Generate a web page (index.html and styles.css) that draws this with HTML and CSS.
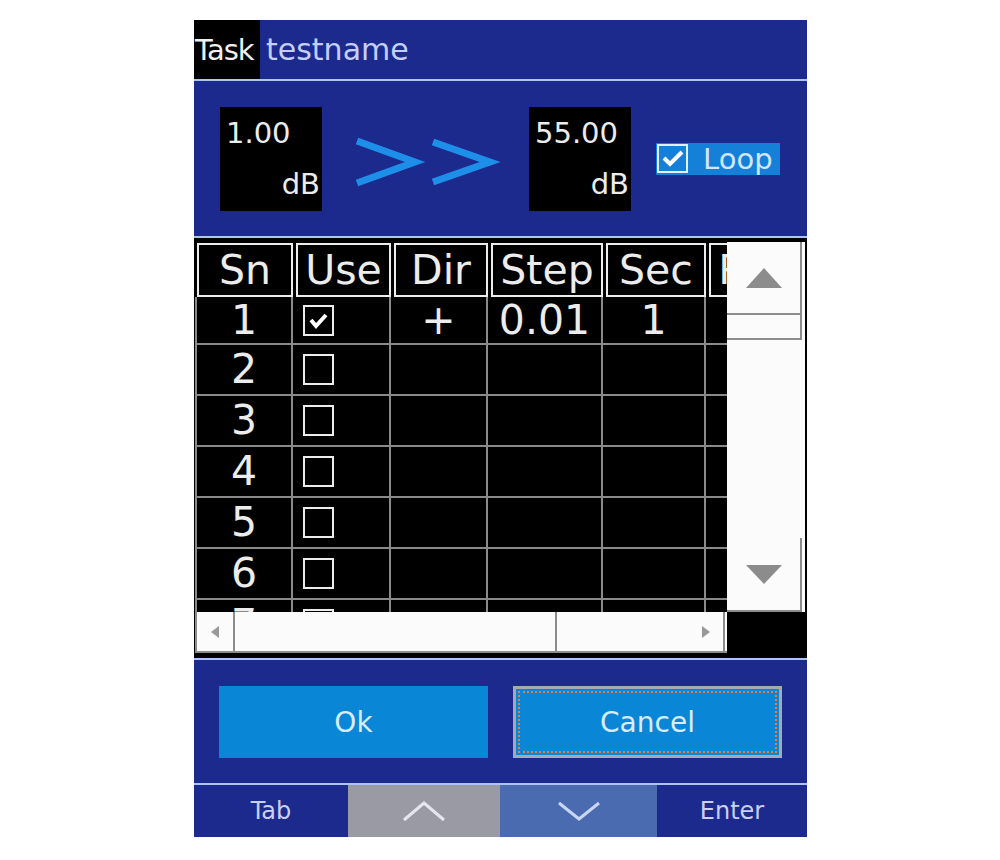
FILE: index.html
```html
<!DOCTYPE html>
<html>
<head>
<meta charset="utf-8">
<link rel="stylesheet" href="styles.css">
</head>
<body>
<div class="panel">
  <div class="titlebar"><span class="tag">Task</span><span class="name">testname</span></div>
  <div class="rule"></div>
  <div class="range">
    <div class="valbox"><span class="val">1.00</span><span class="unit">dB</span></div>
    <svg class="arrows" viewBox="0 0 142 52" width="142" height="52">
      <polyline points="5,8 63,29 5,50" />
      <polyline points="81,9 138,29 81,49" />
    </svg>
    <div class="valbox second"><span class="val">55.00</span><span class="unit">dB</span></div>
    <div class="loop">
      <span class="cb"><svg viewBox="0 0 27 25" width="27" height="25"><polyline points="5,12 11,18 23,6" /></svg></span>
      <span class="loop-label">Loop</span>
    </div>
  </div>
  <div class="rule"></div>
  <div class="gridarea">
    <div class="viewport">
      <div class="table">
        <div class="th first">Sn</div>
        <div class="th">Use</div>
        <div class="th">Dir</div>
        <div class="th">Step</div>
        <div class="th">Sec</div>
        <div class="th">Rpt</div>

        <div class="td first">1</div>
        <div class="td use"><span class="box"><svg viewBox="0 0 27 27" width="27" height="27"><polyline points="6,13 11,19 21,8" /></svg></span></div>
        <div class="td">+</div>
        <div class="td">0.01</div>
        <div class="td">1</div>
        <div class="td"></div>

        <div class="td first">2</div>
        <div class="td use"><span class="box"></span></div>
        <div class="td"></div><div class="td"></div><div class="td"></div><div class="td"></div>

        <div class="td first">3</div>
        <div class="td use"><span class="box"></span></div>
        <div class="td"></div><div class="td"></div><div class="td"></div><div class="td"></div>

        <div class="td first">4</div>
        <div class="td use"><span class="box"></span></div>
        <div class="td"></div><div class="td"></div><div class="td"></div><div class="td"></div>

        <div class="td first">5</div>
        <div class="td use"><span class="box"></span></div>
        <div class="td"></div><div class="td"></div><div class="td"></div><div class="td"></div>

        <div class="td first">6</div>
        <div class="td use"><span class="box"></span></div>
        <div class="td"></div><div class="td"></div><div class="td"></div><div class="td"></div>

        <div class="td first">7</div>
        <div class="td use"><span class="box"></span></div>
        <div class="td"></div><div class="td"></div><div class="td"></div><div class="td"></div>
      </div>
    </div>
    <div class="vscroll">
      <div class="vbtn"><span class="tri-up"></span></div>
      <div class="vthumb"></div>
      <div class="vtrack"></div>
      <div class="vbtn down"><span class="tri-down"></span></div>
    </div>
    <div class="hscroll">
      <div class="hbtn"><span class="tri-left"></span></div>
      <div class="hthumb"></div>
      <div class="htrack"></div>
      <div class="hbtn right"><span class="tri-right"></span></div>
    </div>
    <div class="corner"></div>
  </div>
  <div class="rule"></div>
  <div class="actions">
    <button class="btn">Ok</button>
    <button class="btn focus">Cancel</button>
  </div>
  <div class="rule"></div>
  <div class="softkeys">
    <div class="key">Tab</div>
    <div class="key up"><svg viewBox="0 0 44 22" width="44" height="22"><polyline points="2,20 22,3 42,20" /></svg></div>
    <div class="key down"><svg viewBox="0 0 44 22" width="44" height="22"><polyline points="2,3 22,19 42,3" /></svg></div>
    <div class="key">Enter</div>
  </div>
</div>
</body>
</html>
```
FILE: styles.css
```css
* { box-sizing: border-box; }

body {
  margin: 0;
  background: #ffffff;
  font-family: "DejaVu Sans", "Noto Sans", sans-serif;
}

.panel {
  width: 613px;
  margin: 20px 0 0 194px;
  background: #1c2a8e;
}

.titlebar {
  height: 59px;
  display: flex;
  align-items: center;
}

.tag {
  height: 100%;
  width: 66px;
  background: #000;
  color: #f0f0f0;
  font-size: 29px;
  letter-spacing: -1px;
  display: flex;
  align-items: center;
  padding-left: 1px;
}

.name {
  margin-left: 6px;
  color: #c4cfff;
  font-size: 30px;
}

.rule {
  height: 2px;
  background: #aec4f2;
}

.range {
  height: 155px;
  display: flex;
  align-items: center;
  padding-left: 26px;
}

.valbox {
  width: 102px;
  height: 104px;
  background: #000;
  color: #ececec;
  font-size: 29px;
  line-height: 1;
  display: flex;
  flex-direction: column;
  justify-content: space-between;
  padding: 12px 2px 12px 6px;
}

.unit { align-self: flex-end; }

.valbox.second { margin-left: 35px; }

.arrows {
  margin-left: 30px;
  overflow: visible;
}

.arrows polyline {
  fill: none;
  stroke: #1e8fe8;
  stroke-width: 7;
  stroke-linejoin: miter;
}

.loop {
  margin-left: 25px;
  width: 124px;
  height: 32px;
  background: #1580d8;
  display: flex;
  align-items: center;
  padding-left: 1px;
  color: #d2e6ff;
  font-size: 29px;
}

.cb {
  width: 31px;
  height: 29px;
  border: 2px solid #e6eef8;
  margin-right: 15px;
  display: flex;
}

.cb polyline {
  fill: none;
  stroke: #ffffff;
  stroke-width: 4;
}

.gridarea {
  height: 420px;
  background: #000;
  display: grid;
  grid-template-columns: 532px 78px;
  grid-template-rows: 372px 41px;
  padding: 2px 2px 0 1px;
}

.viewport {
  overflow: hidden;
}

.table {
  display: grid;
  grid-template-columns: 98px 98px 97px 115px 103px 92px;
  grid-template-rows: 57px 48px repeat(6, 51px);
  width: max-content;
  color: #ececec;
  font-size: 41px;
  line-height: 1;
}

.th {
  border: 2px solid #ececec;
  margin: 3px 0 0 3px;
  display: flex;
  align-items: center;
  justify-content: center;
}

.th.first { margin-left: 2px; }

.td {
  display: flex;
  align-items: center;
  justify-content: center;
  border-right: 2px solid #8a8a8a;
  border-bottom: 2px solid #8a8a8a;
}

.td.first { border-left: 2px solid #8a8a8a; }

.td.use {
  justify-content: flex-start;
  padding-left: 10px;
}

.box {
  width: 31px;
  height: 31px;
  border: 2px solid #ececec;
  display: flex;
}

.box polyline {
  fill: none;
  stroke: #ffffff;
  stroke-width: 4;
}

.vscroll {
  margin-top: 2px;
  background: #fbfbfb;
  display: flex;
  flex-direction: column;
  padding-right: 3px;
}

.vbtn {
  height: 73px;
  border-right: 2px solid #8c8c8c;
  border-bottom: 2px solid #8c8c8c;
  display: flex;
  align-items: center;
  justify-content: center;
}

.vbtn.down { height: 74px; }

.vthumb {
  height: 25px;
  border-right: 2px solid #8c8c8c;
  border-bottom: 2px solid #8c8c8c;
}

.vtrack { flex: 1; }

.tri-up {
  width: 0;
  height: 0;
  border-left: 18px solid transparent;
  border-right: 18px solid transparent;
  border-bottom: 20px solid #8c8c8c;
}

.tri-down {
  width: 0;
  height: 0;
  border-left: 18px solid transparent;
  border-right: 18px solid transparent;
  border-top: 19px solid #8c8c8c;
}

.hscroll {
  background: #fbfbfb;
  border-left: 2px solid #8c8c8c;
  border-bottom: 2px solid #8c8c8c;
  display: flex;
}

.hbtn {
  width: 38px;
  border-right: 2px solid #8c8c8c;
  display: flex;
  align-items: center;
  justify-content: center;
}

.hbtn.right {
  width: 36px;
  margin-right: 2px;
}

.hthumb {
  width: 322px;
  border-right: 2px solid #8c8c8c;
}

.htrack { flex: 1; }

.tri-left {
  width: 0;
  height: 0;
  border-top: 6px solid transparent;
  border-bottom: 6px solid transparent;
  border-right: 8px solid #999;
}

.tri-right {
  width: 0;
  height: 0;
  border-top: 6px solid transparent;
  border-bottom: 6px solid transparent;
  border-left: 8px solid #999;
}

.actions {
  height: 123px;
  display: flex;
  gap: 25px;
  padding: 26px 0 0 25px;
}

.btn {
  width: 269px;
  height: 72px;
  background: #0a86d6;
  border: none;
  padding: 0;
  color: #d8ecff;
  font-family: "DejaVu Sans", "Noto Sans", sans-serif;
  font-size: 28px;
}

.btn.focus {
  position: relative;
  border: 3px solid #a3a9b7;
}

.btn.focus::after {
  content: "";
  position: absolute;
  inset: 2px;
  border: 2px dotted #f07a3c;
}

.softkeys {
  height: 52px;
  display: grid;
  grid-template-columns: 154px 152px 157px 150px;
}

.key {
  display: flex;
  align-items: center;
  justify-content: center;
  color: #c9d0f2;
  font-size: 24px;
}

.key.up { background: #9a9aa4; }
.key.down { background: #4a6bb0; }

.key polyline {
  fill: none;
  stroke: #e4e6f0;
  stroke-width: 3;
}

.key.down polyline { stroke: #c8d8f4; }
```
